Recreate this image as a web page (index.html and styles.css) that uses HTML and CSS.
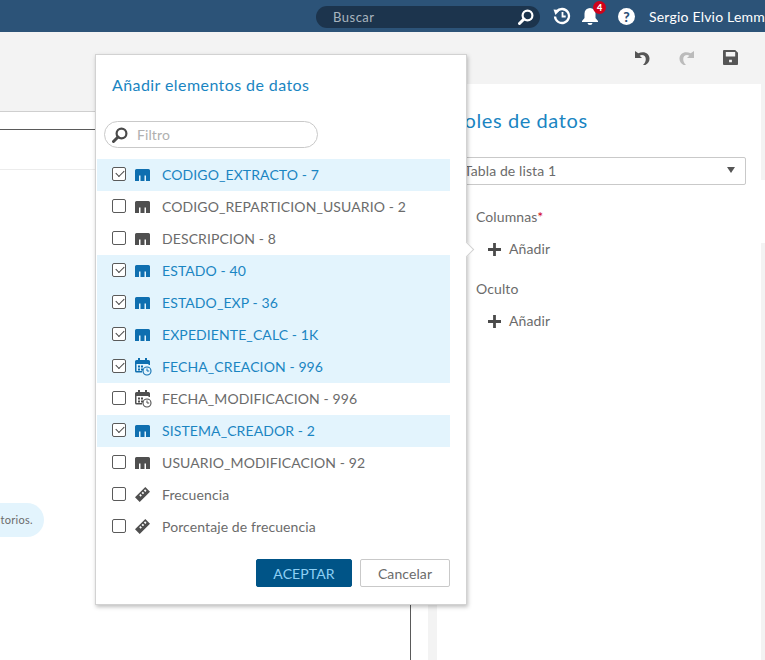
FILE: index.html
```html
<!DOCTYPE html>
<html lang="es">
<head>
    <meta charset="UTF-8">
    <meta name="viewport" content="width=device-width, initial-scale=1.0">
    <title>Añadir elementos de datos</title>
    <link rel="stylesheet" href="styles.css">
</head>
<body>

    <svg class="icon-defs" xmlns="http://www.w3.org/2000/svg">
        <symbol id="icon-category" viewBox="0 0 15 12">
            <path d="M1.500 0h12A1.500 1.500 0 0 1 15 1.500V12h-4V6.500H9.500V12h-4V6.500H4V12H0V1.500A1.500 1.500 0 0 1 1.500 0z"/>
        </symbol>
        <symbol id="icon-date" viewBox="0 0 17 18">
            <path d="M3 0h2v2h5V0h2v2h1.500A1.500 1.500 0 0 1 15 3.500V7h-1.500V6H1.500v7H7v1.500H1.500A1.500 1.500 0 0 1 0 13V3.500A1.500 1.500 0 0 1 1.500 2H3z"/>
            <path d="M3 7.500h2v2H3zM6 7.500h2v2H6zM3 10.500h2v2H3zM6 10.500h2v2H6z"/>
            <circle cx="12" cy="13" r="4" fill="none" stroke="currentColor" stroke-width="1.100"/>
            <path d="M12 10.500V13h2.200" fill="none" stroke="currentColor" stroke-width="1"/>
        </symbol>
        <symbol id="icon-measure" viewBox="0 0 16 16">
            <path d="M11 0l5 5L5 16l-5-5zM10.800 2.500l-1.300 1.300 1.500 1.500 1.300-1.300zM8.300 5l-1.300 1.300 1.500 1.500 1.300-1.300zM5.800 7.500l-1.300 1.300 1.500 1.500 1.300-1.300z" fill-rule="evenodd"/>
        </symbol>
        <symbol id="icon-plus" viewBox="0 0 14 14">
            <path d="M5.500 0h3v5.500H14v3H8.500V14h-3V8.500H0v-3h5.500z"/>
        </symbol>
        <symbol id="icon-search" viewBox="0 0 16 16">
            <circle cx="9.500" cy="6.500" r="4.900" fill="none" stroke="currentColor" stroke-width="2.200"/>
            <path d="M6 10L1.500 14.500" fill="none" stroke="currentColor" stroke-width="3" stroke-linecap="round"/>
        </symbol>
    </svg>

    <header class="topbar">
        <div class="search-box">
            <span>Buscar</span>
            <svg class="search-icon"><use href="#icon-search"/></svg>
        </div>
        <svg class="top-icon history" viewBox="0 0 18 18">
            <path d="M3.600 4.500A7 7 0 1 1 2 9.500" fill="none" stroke="#fff" stroke-width="2.300"/>
            <path d="M0.500 2.500L7 3 2.500 8z" fill="#fff"/>
            <path d="M9.500 5v4.500h3.200" fill="none" stroke="#fff" stroke-width="1.800"/>
        </svg>
        <div class="bell-wrap">
            <svg class="top-icon" viewBox="0 0 18 18">
                <path d="M9 1a5.500 5.500 0 0 1 5.500 5.500V11l2.500 3v1H1v-1l2.500-3V6.500A5.500 5.500 0 0 1 9 1z" fill="#fff"/>
                <path d="M6.500 16h5a2.500 2 0 0 1-5 0z" fill="#fff"/>
            </svg>
            <span class="badge">4</span>
        </div>
        <div class="help-icon">?</div>
        <div class="user-name">Sergio Elvio Lemme</div>
    </header>

    <div class="toolbar">
        <svg class="tool-icon" viewBox="0 0 16 16">
            <path d="M0 1v7.500h7.500L5 6c3-1.500 6.500 0 6.500 3.500 0 2.500-1 4.500-3 6.500h2.500c3-2 4.500-4 4.500-7C15.500 3.500 9.500 .5 3.500 3.500z" fill="#555"/>
        </svg>
        <svg class="tool-icon" viewBox="0 0 16 16">
            <path d="M16 1v7.500H8.500L11 6C8 4.500 4.500 6 4.500 9.500c0 2.500 1 4.500 3 6.500H5c-3-2-4.500-4-4.500-7 0-5.500 6-8.500 12-5.500z" fill="#bbb"/>
        </svg>
        <svg class="tool-icon" viewBox="0 0 16 16">
            <path d="M1 0h12l3 3v12a1 1 0 0 1-1 1H1a1 1 0 0 1-1-1V1a1 1 0 0 1 1-1zM3 2v5h10V2zM6.500 10.500V13h3v-2.500z" fill="#555" fill-rule="evenodd"/>
        </svg>
    </div>

    <main class="workspace">
        <section class="canvas">
            <div class="canvas-top"></div>
            <div class="tab-line"></div>
            <div class="report-area">
                <div class="report-head"></div>
                <div class="notice">torios.</div>
            </div>
        </section>
        <div class="splitter"></div>
        <aside class="roles">
            <h2 class="roles-title">Roles de datos</h2>
            <div class="select-box">
                <span>Tabla de lista 1</span>
                <span class="select-arrow"></span>
            </div>
            <div class="role-label">Columnas<span class="required">*</span></div>
            <div class="add-row">
                <svg class="plus-icon"><use href="#icon-plus"/></svg>
                <span>Añadir</span>
            </div>
            <div class="role-label">Oculto</div>
            <div class="add-row">
                <svg class="plus-icon"><use href="#icon-plus"/></svg>
                <span>Añadir</span>
            </div>
        </aside>
        <div class="side-strip">
            <div class="strip-top"></div>
            <div class="strip-bottom"></div>
        </div>
    </main>

    <div class="dialog">
        <h3 class="dialog-title">Añadir elementos de datos</h3>
        <div class="filter-box">
            <svg class="filter-icon"><use href="#icon-search"/></svg>
            <span>Filtro</span>
        </div>
        <ul class="item-list">
            <li class="item selected"><span class="check"></span><svg class="item-icon"><use href="#icon-category"/></svg>CODIGO_EXTRACTO - 7</li>
            <li class="item"><span class="check"></span><svg class="item-icon"><use href="#icon-category"/></svg>CODIGO_REPARTICION_USUARIO - 2</li>
            <li class="item"><span class="check"></span><svg class="item-icon"><use href="#icon-category"/></svg>DESCRIPCION - 8</li>
            <li class="item selected"><span class="check"></span><svg class="item-icon"><use href="#icon-category"/></svg>ESTADO - 40</li>
            <li class="item selected"><span class="check"></span><svg class="item-icon"><use href="#icon-category"/></svg>ESTADO_EXP - 36</li>
            <li class="item selected"><span class="check"></span><svg class="item-icon"><use href="#icon-category"/></svg>EXPEDIENTE_CALC - 1K</li>
            <li class="item selected"><span class="check"></span><svg class="item-icon date"><use href="#icon-date"/></svg>FECHA_CREACION - 996</li>
            <li class="item"><span class="check"></span><svg class="item-icon date"><use href="#icon-date"/></svg>FECHA_MODIFICACION - 996</li>
            <li class="item selected"><span class="check"></span><svg class="item-icon"><use href="#icon-category"/></svg>SISTEMA_CREADOR - 2</li>
            <li class="item"><span class="check"></span><svg class="item-icon"><use href="#icon-category"/></svg>USUARIO_MODIFICACION - 92</li>
            <li class="item"><span class="check"></span><svg class="item-icon measure"><use href="#icon-measure"/></svg>Frecuencia</li>
            <li class="item"><span class="check"></span><svg class="item-icon measure"><use href="#icon-measure"/></svg>Porcentaje de frecuencia</li>
        </ul>
        <div class="dialog-buttons">
            <button class="btn btn-primary">ACEPTAR</button>
            <button class="btn btn-cancel">Cancelar</button>
        </div>
        <span class="dialog-arrow"></span>
    </div>

</body>
</html>
```

FILE: styles.css
```css
* {
    box-sizing: border-box;
}
body {
    margin: 0;
    height: 660px;
    overflow: hidden;
    font-family: Lato, "Open Sans", sans-serif;
    font-size: 14px;
    letter-spacing: 0.1px;
    color: #6b6b6b;
    background: #fff;
    display: flex;
    flex-direction: column;
}
.icon-defs {
    display: none;
}

/* barra superior */
.topbar {
    flex: 0 0 32px;
    background: #2c5378;
    display: flex;
    align-items: center;
    padding-left: 316px;
    white-space: nowrap;
    overflow: hidden;
}
.topbar > * {
    flex-shrink: 0;
}
.search-box {
    width: 224px;
    height: 22px;
    margin-top: 1px;
    border-radius: 11px;
    background: #1c344d;
    color: #a9b4bf;
    font-size: 13px;
    letter-spacing: 0.5px;
    display: flex;
    align-items: center;
    justify-content: space-between;
    padding: 0 6px 0 17px;
}
.search-icon {
    width: 16px;
    height: 16px;
    color: #fff;
}
.top-icon {
    width: 18px;
    height: 18px;
    display: block;
}
.history {
    margin-left: 13px;
}
.bell-wrap {
    position: relative;
    margin-left: 10px;
}
.badge {
    position: absolute;
    top: -6px;
    left: 12px;
    width: 13px;
    height: 13px;
    border-radius: 50%;
    background: #d0021b;
    color: #fff;
    font-size: 9px;
    font-weight: 900;
    letter-spacing: 0;
    line-height: 13px;
    text-align: center;
}
.help-icon {
    width: 17px;
    height: 17px;
    border-radius: 50%;
    background: #fff;
    color: #2c5378;
    font-size: 14px;
    font-weight: 900;
    letter-spacing: 0;
    line-height: 17px;
    text-align: center;
    margin-left: 19px;
}
.user-name {
    color: #fff;
    font-size: 14px;
    letter-spacing: 0.2px;
    margin-left: 14px;
}

/* herramientas */
.toolbar {
    flex: 0 0 52px;
    background: #f3f3f3;
    display: flex;
    justify-content: flex-end;
    align-items: flex-start;
    gap: 29px;
    padding: 18px 27px 0 0;
}
.tool-icon {
    width: 15px;
    height: 15px;
}

/* area de trabajo */
.workspace {
    flex: 1;
    display: grid;
    grid-template-columns: 428px 9px 1fr 4px;
    min-height: 0;
}
.canvas {
    display: flex;
    flex-direction: column;
}
.canvas-top {
    flex: 0 0 28px;
    background: #f3f3f3;
    border-bottom: 1px solid #cfcfcf;
}
.tab-line {
    flex: 0 0 18px;
    border-bottom: 1px solid #5a5a5a;
}
.report-area {
    flex: 1;
    margin-right: 17px;
    border-right: 1px solid #5a5a5a;
}
.report-head {
    height: 40px;
    border-bottom: 1px solid #ececec;
}
.notice {
    margin-top: 333px;
    width: 44px;
    height: 34px;
    border-radius: 0 17px 17px 0;
    background: #e3f4fd;
    font-size: 11px;
    letter-spacing: 0.3px;
    line-height: 34px;
    text-align: right;
    padding-right: 11px;
    white-space: nowrap;
}
.splitter {
    background: #f3f3f3;
}
.roles {
    padding: 0 15px;
    min-width: 0;
}
.roles-title {
    margin: 24px 0 0;
    color: #1a85c2;
    font-size: 20px;
    font-weight: 400;
    line-height: 24px;
    letter-spacing: 0.6px;
    white-space: nowrap;
}
.select-box {
    margin-top: 25px;
    height: 28px;
    border: 1px solid #c9c9c9;
    border-radius: 2px;
    display: flex;
    align-items: center;
    justify-content: space-between;
    padding: 0 10px 2px 11px;
}
.select-arrow {
    width: 0;
    height: 0;
    border-left: 4px solid transparent;
    border-right: 4px solid transparent;
    border-top: 6px solid #555;
}
.role-label {
    margin: 22px 0 0 24px;
    line-height: 20px;
}
.required {
    color: #d0021b;
}
.add-row {
    margin: 12px 0 0 36px;
    display: flex;
    align-items: center;
    gap: 8px;
    line-height: 20px;
    height: 20px;
}
.add-row + .role-label {
    margin-top: 20px;
}
.plus-icon {
    width: 13px;
    height: 13px;
    fill: #4a4a4a;
}
.side-strip {
    display: flex;
    flex-direction: column;
}
.strip-top {
    flex: 0 0 96px;
    background: #f3f3f3;
}
.strip-bottom {
    flex: 1;
    margin-top: 63px;
    background: #f3f3f3;
}

/* dialogo */
.dialog {
    position: absolute;
    left: 95px;
    top: 54px;
    width: 372px;
    height: 551px;
    background: #fff;
    border: 1px solid #d2d2d2;
    box-shadow: 1px 2px 4px rgba(0, 0, 0, 0.25);
}
.dialog-title {
    margin: 0;
    position: absolute;
    left: 16px;
    top: 19px;
    color: #1a85c2;
    font-size: 16px;
    font-weight: 400;
    line-height: 22px;
    letter-spacing: 0.42px;
}
.filter-box {
    position: absolute;
    left: 8px;
    top: 66px;
    width: 214px;
    height: 27px;
    border: 1px solid #c9c9c9;
    border-radius: 14px;
    display: flex;
    align-items: center;
    gap: 9px;
    padding-left: 7px;
    color: #b0b0b0;
}
.filter-icon {
    width: 16px;
    height: 16px;
    color: #4a4a4a;
}
.item-list {
    list-style: none;
    margin: 0;
    padding: 0;
    position: absolute;
    left: 1px;
    top: 104px;
    width: 353px;
}
.item {
    height: 32px;
    display: flex;
    align-items: center;
    padding: 0 0 2px 15px;
    white-space: nowrap;
}
.item.selected {
    background: #e3f4fd;
    color: #1a85c2;
}
.check {
    position: relative;
    flex: 0 0 14px;
    height: 14px;
    border: 1px solid #5a5a5a;
    border-radius: 2px;
    background: #fff;
    margin-right: 9px;
}
.selected .check::after {
    content: "";
    position: absolute;
    left: 2.500px;
    top: 2px;
    width: 7px;
    height: 4px;
    border-left: 1px solid #444;
    border-bottom: 1px solid #444;
    transform: rotate(-45deg);
}
.item-icon {
    flex: 0 0 15px;
    width: 15px;
    height: 12px;
    fill: #4f4f4f;
    color: #4f4f4f;
    margin: 2px 12px 0 0;
}
.selected .item-icon {
    fill: #0f6fb0;
    color: #0f6fb0;
}
.item-icon.date {
    flex-basis: 17px;
    width: 17px;
    height: 18px;
    margin: 2px 10px 0 0;
}
.item-icon.measure {
    height: 15px;
    margin-top: 1px;
}
.dialog-buttons {
    position: absolute;
    right: 16px;
    bottom: 17px;
    display: flex;
    gap: 8px;
}
.btn {
    height: 28px;
    font-family: inherit;
    font-size: 14px;
    letter-spacing: 0.1px;
    border-radius: 2px;
    padding: 0;
}
.btn-primary {
    width: 96px;
    background: #005487;
    border: 1px solid #005487;
    color: #8fd0f5;
}
.btn-cancel {
    width: 90px;
    background: #fff;
    border: 1px solid #c9c9c9;
    color: #6b6b6b;
}
.dialog-arrow {
    position: absolute;
    left: 365px;
    top: 189px;
    width: 11px;
    height: 11px;
    background: #fff;
    border-top: 1px solid #d2d2d2;
    border-right: 1px solid #d2d2d2;
    transform: rotate(45deg);
}
```
